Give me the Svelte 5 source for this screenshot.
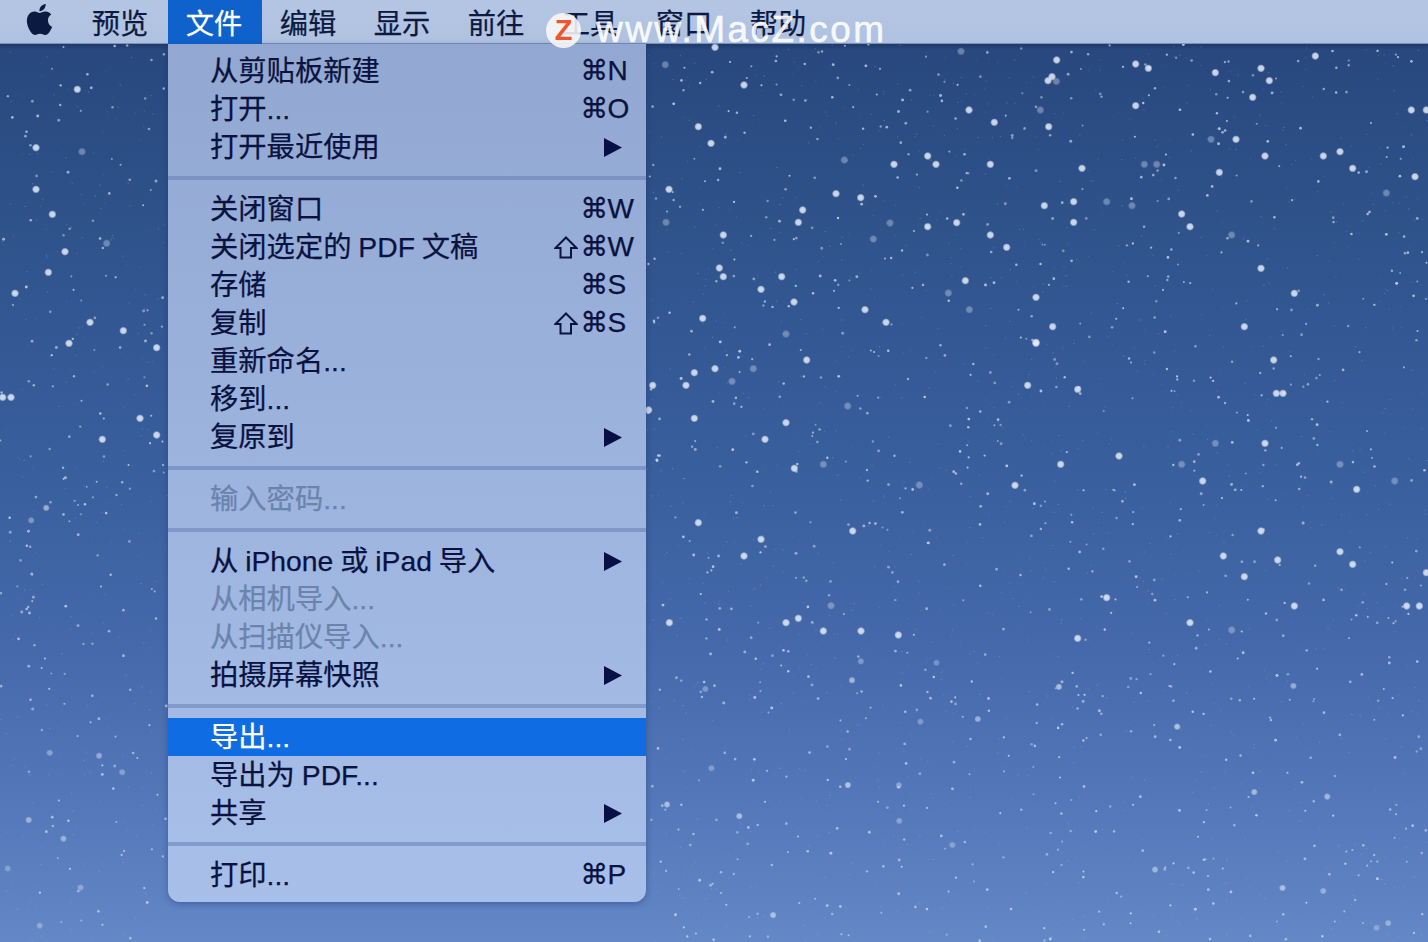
<script>
	// menu contents
	const barItems = ['预览', '文件', '编辑', '显示', '前往', '工具', '窗口', '帮助'];
	const groups = [
		[
			{ label: '从剪贴板新建', keys: 'N' },
			{ label: '打开...', keys: 'O' },
			{ label: '打开最近使用', sub: true }
		],
		[
			{ label: '关闭窗口', keys: 'W' },
			{ label: '关闭选定的 PDF 文稿', keys: 'W', shift: true },
			{ label: '存储', keys: 'S' },
			{ label: '复制', keys: 'S', shift: true },
			{ label: '重新命名...' },
			{ label: '移到...' },
			{ label: '复原到', sub: true }
		],
		[{ label: '输入密码...', off: true }],
		[
			{ label: '从 iPhone 或 iPad 导入', sub: true },
			{ label: '从相机导入...', off: true },
			{ label: '从扫描仪导入...', off: true },
			{ label: '拍摄屏幕快照', sub: true }
		],
		[
			{ label: '导出...', active: true },
			{ label: '导出为 PDF...' },
			{ label: '共享', sub: true }
		],
		[{ label: '打印...', keys: 'P' }]
	];

	// bright stars read off the wallpaper: [x, y, dim]
	const crops = [
		[646, 44, [[58,62,1],[207,10],[294,123],[157,248],[195,298],[945,22,1],[969,198],[1045,235],[845,336],[870,361],[1033,361],[744,361],[595,348,1],[69,436],[570,449],[644,461],[470,498],[457,535],[232,573],[845,548],[932,536],[732,537,1],[682,585,1],[1033,573],[1082,610],[220,672],[232,698],[407,698],[345,736],[958,710],[444,774],[657,797],[170,823],[720,835],[907,747,1],[970,797,1],[420,870,1],[60,535,1]]],
		[1028, 44, [[86,48],[60,110],[85,112,1],[72,98],[323,60],[361,73],[562,86],[699,73],[724,110],[862,36],[37,198,1],[62,248],[323,185],[674,160],[1150,198],[1195,198],[549,286,1],[624,286],[711,336],[886,336],[936,323],[349,361,1],[386,361,1],[162,373],[574,385],[974,373],[1161,398],[49,485],[137,473],[236,473,1],[312,485,1],[137,535],[461,510],[486,548],[611,573,1],[699,673],[799,748],[24,760],[74,848],[649,848],[1075,447,1],[24,895]]],
		[646, 340, [[482,60],[207,86],[145,98],[120,136],[20,136],[8,210],[145,235],[420,248],[357,298],[445,385],[532,373,1],[258,124,1],[322,86,1],[1145,136],[1170,10],[605,198,1],[157,548],[345,598],[294,648],[620,573],[1107,436],[820,435,1],[70,848],[420,848],[457,835],[532,873],[645,873],[757,885],[555,797,1]]],
		[1028, 340, [[737,60],[149,148],[745,160],[765,160],[711,310],[562,310,1],[273,348],[98,373],[461,373,1],[936,373,1],[524,423],[986,448],[1100,423,1],[699,573],[586,648],[749,660],[936,635],[974,673],[649,710],[1195,698],[236,773],[799,798],[1136,798],[1174,798],[486,848],[611,870,1],[149,895]]],
		[0, 44, [[232,136],[108,311],[246,323,1],[108,436],[157,511],[195,623],[320,598,1],[145,685],[45,748],[270,835],[370,860],[207,898],[470,911],[8,1060],[33,1060],[420,1123],[307,1186],[470,1173]]]
	];
	const bigStars = crops.flatMap(([ox, oy, list]) =>
		list.map(([x, y, dim]) => ({ x: ox + x / 3, y: oy + y / 3, dim: !!dim }))
	);

	// the small ones are scattered, seeded so the picture stays the same
	let seed = 20417;
	function rnd() {
		seed = (seed * 16807) % 2147483647;
		return seed / 2147483647;
	}
	function freeX() {
		const x = rnd() * (168 + 782);
		return x < 168 ? x : x + 478;
	}
	const smallStars = [];
	for (let i = 0; i < 1120; i++) {
		smallStars.push({ x: freeX(), y: 44 + rnd() * 898, r: 1 + rnd() * 0.5, o: 0.45 + rnd() * 0.35 });
	}
	const dust = [];
	for (let i = 0; i < 1500; i++) {
		dust.push({ x: freeX(), y: 44 + rnd() * 898, o: 0.1 + rnd() * 0.15 });
	}
	// lower part of the picture has its own few soft large ones
	const lowStars = [];
	for (let i = 0; i < 34; i++) {
		const y = i < 24 ? 640 + rnd() * 300 : 484 + rnd() * 456;
		lowStars.push({ x: i < 24 ? 646 + rnd() * 782 : rnd() * 168, y, o: 0.3 + rnd() * 0.35 });
	}
</script>

<div class="desktop">
	<svg class="stars" width="1428" height="942" viewBox="0 0 1428 942">
		<defs>
			<radialGradient id="soft">
				<stop offset="0" stop-color="#eef3fb" />
				<stop offset="0.6" stop-color="#dde6f5" />
				<stop offset="1" stop-color="#dde6f5" stop-opacity="0" />
			</radialGradient>
		</defs>
		{#each dust as d}
			<circle cx={d.x} cy={d.y} r="0.7" fill="#d5e0f2" opacity={d.o} />
		{/each}
		{#each smallStars as s}
			<circle cx={s.x} cy={s.y} r={s.r} fill="#d3dff2" opacity={s.o} />
		{/each}
		{#each lowStars as s}
			<circle cx={s.x} cy={s.y} r="3.6" fill="url(#soft)" opacity={s.o} />
		{/each}
		{#each bigStars as s}
			<circle cx={s.x} cy={s.y} r="4.2" fill="url(#soft)" opacity={s.dim ? 0.35 : 0.85} />
		{/each}
	</svg>

	<header class="bar">
		<span class="apple">
			<svg width="31" height="31" viewBox="0 0 24 24"><path fill="#0a1a40" d="M12.152 6.896c-.948 0-2.415-1.078-3.96-1.04-2.04.027-3.91 1.183-4.961 3.014-2.117 3.675-.546 9.103 1.519 12.09 1.013 1.454 2.208 3.09 3.792 3.039 1.52-.065 2.09-.987 3.935-.987 1.831 0 2.35.987 3.96.948 1.637-.026 2.676-1.48 3.676-2.948 1.156-1.688 1.636-3.325 1.662-3.415-.039-.013-3.182-1.221-3.22-4.857-.026-3.04 2.48-4.494 2.597-4.559-1.429-2.09-3.623-2.324-4.39-2.376-2-.156-3.675 1.09-4.61 1.09zM15.53 3.83c.843-1.012 1.4-2.427 1.245-3.83-1.207.052-2.662.805-3.532 1.818-.78.896-1.454 2.338-1.273 3.714 1.338.104 2.715-.688 3.559-1.701" /></svg>
		</span>
		{#each barItems as item, i}
			<span class="bar-item" class:open={i === 1}>{item}</span>
		{/each}
	</header>

	<nav class="menu">
		{#each groups as group, g}
			{#if g > 0}<div class="sep"></div>{/if}
			{#each group as item}
				<div class="row" class:off={item.off} class:active={item.active}>
					<span class="label">{item.label}</span>
					{#if item.keys}
						<span class="keys">
							<span class="shift">
								{#if item.shift}
									<svg width="24" height="23" viewBox="0 0 24 23"><polygon points="12,1.5 22.5,12 17,12 17,21.5 6.5,21.5 6.5,12 1.5,12" fill="none" stroke="#0a1240" stroke-width="2" stroke-linejoin="miter" /></svg>
								{/if}
							</span>
							<span class="cmd">⌘</span><span>{item.keys}</span>
						</span>
					{:else if item.sub}
						<span class="keys">
							<svg class="arrow" width="18" height="19" viewBox="0 0 18 19"><polygon points="0,0 18,9.5 0,19" fill="#070f44" /></svg>
						</span>
					{/if}
				</div>
			{/each}
		{/each}
	</nav>

	<div class="mark">
		<span class="mark-logo">Z</span>
		<span class="mark-text">www.MacZ.com</span>
	</div>
</div>

<style>
	:global(body) {
		margin: 0;
	}
	.desktop {
		position: relative;
		width: 1428px;
		height: 942px;
		overflow: hidden;
		font-family: 'Liberation Sans', 'Noto Sans CJK SC', sans-serif;
		background: linear-gradient(180deg, #1f3a6c 44px, #28487f 50px, #2e5189 200px, #365b98 400px, #4468a9 640px, #5377b8 800px, #6487c6 942px);
	}
	.stars {
		position: absolute;
		left: 0;
		top: 0;
	}
	.bar {
		position: relative;
		display: flex;
		height: 43px;
		padding-left: 24px;
		background: linear-gradient(180deg, #b5c6e3, #afc2e1);
		border-bottom: 1px solid #7a90bb;
		color: #0c1a42;
		font-size: 28.3px;
		-webkit-text-stroke: 0.25px currentColor;
	}
	.apple {
		width: 50px;
		height: 43px;
		display: flex;
		align-items: flex-start;
		padding-top: 4px;
		box-sizing: border-box;
	}
	.bar-item {
		display: flex;
		align-items: center;
		justify-content: center;
		box-sizing: border-box;
		width: 94px;
		height: 44px;
		padding: 4px 2px 0 0;
		line-height: 40px;
	}
	.bar-item.open {
		background: #0f62cc;
		color: #fff;
	}
	.menu {
		position: absolute;
		left: 168px;
		top: 44px;
		width: 478px;
		box-sizing: border-box;
		padding: 8px 0;
		border-radius: 0 0 12px 12px;
		background: linear-gradient(180deg, #92a8d1, #9cb3de 400px, #a7bfe9);
		box-shadow: 0 2px 6px rgba(20, 40, 90, 0.35);
		color: #0a1240;
		font-size: 28.3px;
		-webkit-text-stroke: 0.25px currentColor;
	}
	.sep {
		height: 4px;
		margin: 10px 0;
		background: rgba(90, 115, 170, 0.45);
	}
	.row {
		display: flex;
		height: 38px;
		line-height: 38px;
		padding-left: 42px;
		white-space: pre;
		word-spacing: -1px;
	}
	.label {
		flex: 1;
	}
	.row.off {
		color: #6c83ac;
	}
	.row.active {
		background: #106ce2;
		color: #fff;
	}
	.keys {
		display: flex;
		width: 92px;
		height: 38px;
		align-items: center;
		line-height: 38px;
		font-size: 28px;
	}
	.shift {
		display: flex;
		width: 27px;
	}
	.cmd {
		width: 27px;
		margin-left: -0.5px;
		font-family: 'DejaVu Sans', sans-serif;
	}
	.arrow {
		margin-left: 50px;
	}
	.mark {
		position: absolute;
		left: 546px;
		top: 10px;
		display: flex;
		align-items: center;
		gap: 15px;
		pointer-events: none;
	}
	.mark-logo {
		width: 35px;
		height: 35px;
		border-radius: 50%;
		background: rgba(248, 248, 248, 0.88);
		color: #f0562a;
		font-size: 29px;
		font-weight: bold;
		line-height: 35px;
		text-align: center;
	}
	.mark-text {
		color: rgba(255, 255, 255, 0.88);
		-webkit-text-stroke: 0.6px rgba(255, 255, 255, 0.88);
		font-size: 37px;
		line-height: 40px;
		letter-spacing: 2.45px;
		white-space: pre;
	}
</style>
